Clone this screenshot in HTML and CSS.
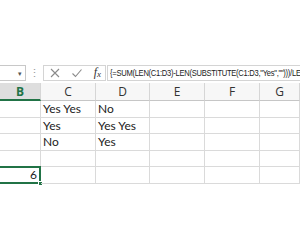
FILE: index.html
```html
<!DOCTYPE html>
<html>
<head>
    <meta charset="UTF-8">
    <link rel="stylesheet" href="styles.css">
</head>
<body>
    <div class="ribbon-gap"></div>

    <div class="formula-bar">
        <div class="name-box"><span class="arrow">&#9662;</span></div>
        <div class="grip">&#8942;</div>
        <div class="buttons">
            <svg class="btn" width="12" height="12" viewBox="0 0 12 12">
                <path d="M2 2 L10 10 M10 2 L2 10" stroke="#8a8a8a" stroke-width="1.1" fill="none"/>
            </svg>
            <svg class="btn" width="12" height="12" viewBox="0 0 12 12">
                <path d="M1.5 6.5 L4.5 9.5 L10.5 2.5" stroke="#8a8a8a" stroke-width="1.1" fill="none"/>
            </svg>
            <span class="fx">f<sub>x</sub></span>
        </div>
        <div class="formula"><span class="formula-text">{=SUM(LEN(C1:D3)-LEN(SUBSTITUTE(C1:D3,"Yes","")))/LEN("Yes")}</span></div>
    </div>

    <div class="sheet">
        <!-- column headers -->
        <div class="col-head selected">B</div>
        <div class="col-head">C</div>
        <div class="col-head">D</div>
        <div class="col-head">E</div>
        <div class="col-head">F</div>
        <div class="col-head">G</div>

        <!-- row 1 -->
        <div class="cell"></div>
        <div class="cell">Yes Yes</div>
        <div class="cell">No</div>
        <div class="cell"></div>
        <div class="cell"></div>
        <div class="cell"></div>

        <!-- row 2 -->
        <div class="cell"></div>
        <div class="cell">Yes</div>
        <div class="cell">Yes Yes</div>
        <div class="cell"></div>
        <div class="cell"></div>
        <div class="cell"></div>

        <!-- row 3 -->
        <div class="cell"></div>
        <div class="cell">No</div>
        <div class="cell">Yes</div>
        <div class="cell"></div>
        <div class="cell"></div>
        <div class="cell"></div>

        <!-- row 4 -->
        <div class="cell"></div>
        <div class="cell"></div>
        <div class="cell"></div>
        <div class="cell"></div>
        <div class="cell"></div>
        <div class="cell"></div>

        <!-- row 5 -->
        <div class="cell active">6<span class="handle"></span></div>
        <div class="cell"></div>
        <div class="cell"></div>
        <div class="cell"></div>
        <div class="cell"></div>
        <div class="cell"></div>
    </div>
</body>
</html>
```

FILE: styles.css
```css
* {
    box-sizing: border-box;
}
body {
    margin: 0;
    width: 300px;
    height: 250px;
    overflow: hidden;
    background-color: #fff;
    font-family: Lato, "Open Sans", sans-serif;
    color: #222;
}
.ribbon-gap {
    height: 65px;
}

.formula-bar {
    display: flex;
    align-items: stretch;
    height: 16px;
    margin-bottom: 2px;
}
.name-box {
    width: 26px;
    border: 1px solid #c8c8c8;
    border-left: none;
    display: flex;
    align-items: center;
    justify-content: flex-end;
    padding-right: 3px;
}
.arrow {
    font-size: 7px;
    color: #555;
}
.grip {
    width: 17px;
    text-align: center;
    font-size: 11px;
    line-height: 16px;
    color: #999;
}
.buttons {
    width: 63px;
    border: 1px solid #d4d4d4;
    display: flex;
    align-items: center;
    justify-content: space-between;
    padding: 0 4px 0 5px;
}
.btn {
    display: block;
}
.fx {
    font-family: "Liberation Serif", serif;
    font-style: italic;
    font-size: 12px;
    color: #333;
    line-height: 12px;
}
.fx sub {
    font-size: 9px;
    vertical-align: -1px;
}
.formula {
    flex: 1;
    min-width: 0;
    display: flex;
    align-items: center;
    margin-left: 1px;
    border: 1px solid #d4d4d4;
    border-right: none;
    padding-left: 2px;
    white-space: nowrap;
    overflow: hidden;
}
.formula-text {
    display: block;
    flex: none;
    font-family: "Liberation Sans", Arial, sans-serif;
    font-size: 8.6px;
    letter-spacing: -0.3px;
    line-height: 12px;
    color: #222;
    transform: scaleX(0.88);
    transform-origin: left center;
}

.sheet {
    display: grid;
    grid-template-columns: 41px 55px 54px 55px 55px 40px;
    grid-template-rows: 18px repeat(5, 16.5px);
}
.col-head {
    background-color: #f7f7f7;
    border-right: 1px solid #d6d6d6;
    border-bottom: 1px solid #c6c6c6;
    text-align: center;
    font-family: "Open Sans", sans-serif;
    font-size: 12px;
    line-height: 17px;
    color: #333;
}
.col-head.selected {
    background-color: #dedede;
    border-bottom: 2px solid #217346;
    color: #217346;
    font-weight: bold;
}
.cell {
    position: relative;
    border-right: 1px solid #dadada;
    border-bottom: 1px solid #dadada;
    font-size: 12px;
    line-height: 16px;
    padding-left: 2px;
    white-space: nowrap;
}
.cell.active {
    border: 2px solid #217346;
    border-left: none;
    margin-top: -1px;
    text-align: right;
    padding-right: 2px;
    line-height: 14px;
}
.handle {
    position: absolute;
    right: -4px;
    bottom: -4px;
    width: 5px;
    height: 5px;
    background-color: #217346;
    border: 1px solid #fff;
}
```
